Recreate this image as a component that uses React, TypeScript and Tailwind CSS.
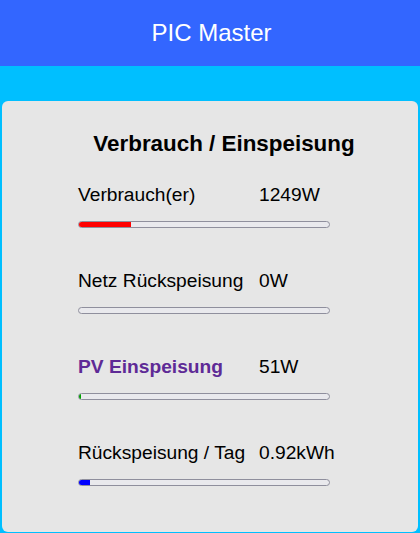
const rows = [
  { label: "Verbrauch(er)", value: "1249W", fill: 52, color: "bg-[#ff0000]", strong: false },
  { label: "Netz Rückspeisung", value: "0W", fill: 0, color: "bg-[#ff0000]", strong: false },
  { label: "PV Einspeisung", value: "51W", fill: 2, color: "bg-[#00a000]", strong: true },
  { label: "Rückspeisung / Tag", value: "0.92kWh", fill: 11, color: "bg-[#0000ff]", strong: false },
];

const Bar = ({ fill, color }: { fill: number; color: string }) => (
  <div className="w-[252px] h-[7px] rounded-full border border-[#8f8f9d] bg-[#e9e9ed] overflow-hidden">
    <div className={`h-full ${color}`} style={{ width: fill }} />
  </div>
);

export default function App() {
  return (
    <div className="min-h-screen bg-[#00bfff] font-['Liberation_Sans',Arial,sans-serif]">
      <header className="h-[66px] bg-[#3366ff] flex items-center justify-center pl-[3px] text-white text-[24px]">
        PIC Master
      </header>
      <div className="pt-[35px] px-[2px]">
        <div className="h-[431px] rounded-[6px] bg-[#e6e6e6] pt-[30px]">
          <div className="ml-[76px] w-[292px]">
            <h2 className="text-center font-bold text-[22.4px] leading-[26px] text-black">
              Verbrauch / Einspeisung
            </h2>
            <div className="mt-[27px] flex flex-col">
              {rows.map((r) => (
                <div key={r.label} className="h-[86px]">
                  <div className="flex text-[19.2px] leading-[22px] text-black">
                    <span
                      className={
                        r.strong
                          ? "w-[181px] font-bold text-[#5e2a96]"
                          : "w-[181px]"
                      }
                    >
                      {r.label}
                    </span>
                    <span>{r.value}</span>
                  </div>
                  <div className="mt-[15px]">
                    <Bar fill={r.fill} color={r.color} />
                  </div>
                </div>
              ))}
            </div>
          </div>
        </div>
      </div>
    </div>
  );
}
